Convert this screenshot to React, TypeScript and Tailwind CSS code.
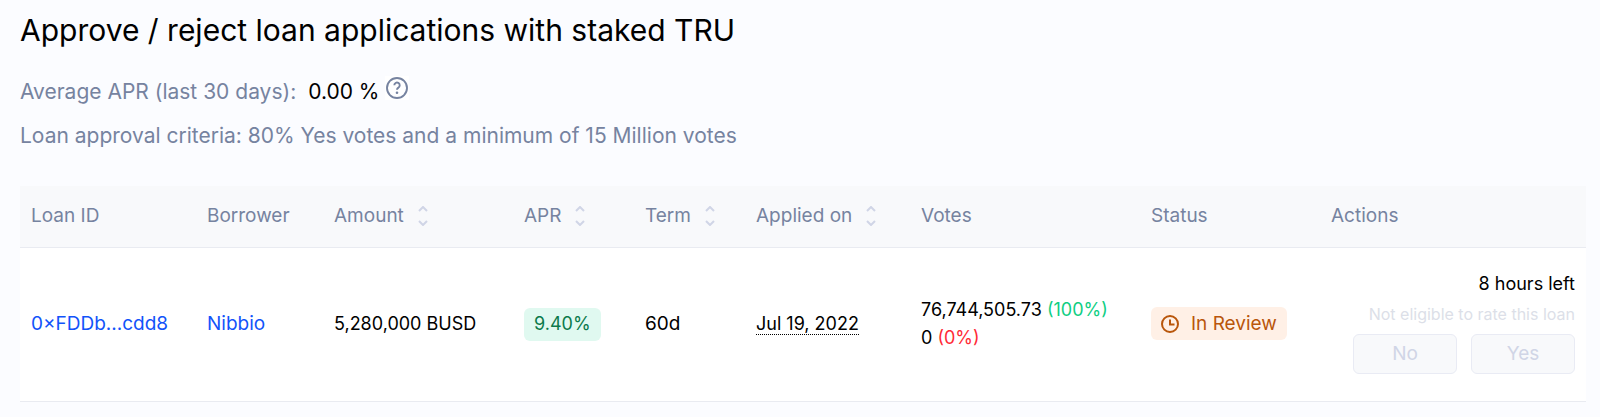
import { useState } from 'react';

type SortKey = 'amount' | 'apr' | 'term' | 'appliedOn';

interface Column {
  label: string;
  width: string;
  sortKey?: SortKey;
}

interface Loan {
  id: string;
  borrower: string;
  amount: number;
  apr: number;
  term: number;
  appliedOn: string;
  yesVotes: string;
  yesShare: string;
  noVotes: string;
  noShare: string;
  status: string;
  timeLeft: string;
}

const COLUMNS: Column[] = [
  { label: 'Loan ID', width: 'w-[176px]' },
  { label: 'Borrower', width: 'w-[127px]' },
  { label: 'Amount', width: 'w-[190px]', sortKey: 'amount' },
  { label: 'APR', width: 'w-[121px]', sortKey: 'apr' },
  { label: 'Term', width: 'w-[111px]', sortKey: 'term' },
  { label: 'Applied on', width: 'w-[165px]', sortKey: 'appliedOn' },
  { label: 'Votes', width: 'w-[230px]' },
  { label: 'Status', width: 'w-[180px]' },
  { label: 'Actions', width: 'w-[266px]' },
];

const LOANS: Loan[] = [
  {
    id: '0×FDDb...cdd8',
    borrower: 'Nibbio',
    amount: 5280000,
    apr: 9.4,
    term: 60,
    appliedOn: 'Jul 19, 2022',
    yesVotes: '76,744,505.73',
    yesShare: '100%',
    noVotes: '0',
    noShare: '0%',
    status: 'In Review',
    timeLeft: '8 hours left',
  },
];

function sortValue(loan: Loan, key: SortKey) {
  return key === 'appliedOn' ? Date.parse(loan.appliedOn) : loan[key];
}

function HelpIcon() {
  return (
    <svg className="h-6 w-6" viewBox="0 0 24 24" fill="none" stroke="currentColor" strokeWidth="1.9">
      <circle cx="12" cy="12" r="10" />
      <path d="M9.3 9.3a2.7 2.7 0 1 1 4.1 2.3c-1 .6-1.4 1.1-1.4 2.2" />
      <circle cx="12" cy="16.8" r="1.3" fill="currentColor" stroke="none" />
    </svg>
  );
}

function SortIcon() {
  return (
    <svg
      className="h-5 w-[10px] text-[#d0d5e6]"
      viewBox="0 0 10 20"
      fill="none"
      stroke="currentColor"
      strokeWidth="2"
    >
      <path d="M1 5l4-4 4 4M1 15l4 4 4-4" />
    </svg>
  );
}

function ClockIcon() {
  return (
    <svg className="h-[18px] w-[18px]" viewBox="0 0 18 18" fill="none" stroke="currentColor" strokeWidth="2">
      <circle cx="9" cy="9" r="8" />
      <path d="M9 4.5V9.5h4.5" />
    </svg>
  );
}

export default function App() {
  const [sortKey, setSortKey] = useState<SortKey | null>(null);
  const [ascending, setAscending] = useState(true);

  const handleSort = (key: SortKey) => {
    setAscending(sortKey === key ? !ascending : true);
    setSortKey(key);
  };

  const loans = [...LOANS];
  if (sortKey) {
    loans.sort((a, b) => (sortValue(a, sortKey) - sortValue(b, sortKey)) * (ascending ? 1 : -1));
  }

  return (
    <main className="min-h-screen bg-[#fbfcff] pt-3 pr-[14px] pb-3 pl-5 font-['Inter',sans-serif] text-black">
      <h1 className="text-[30px] leading-9">Approve / reject loan applications with staked TRU</h1>

      <div className="mt-[26px] flex items-center text-[21px] leading-9 text-[#7683a0]">
        <span>Average APR (last 30 days):</span>
        <span className="ml-3 text-black">0.00 %</span>
        <button type="button" aria-label="About average APR" className="mb-2 ml-1.5 bg-white">
          <HelpIcon />
        </button>
      </div>
      <p className="mt-2 text-[21px] leading-9 text-[#7683a0]">
        Loan approval criteria: 80% Yes votes and a minimum of 15 Million votes
      </p>

      <table className="mt-8 w-full border-collapse text-left text-[19px] leading-7 whitespace-nowrap">
        <thead className="bg-[#f8f9fb] text-[#7683a0]">
          <tr className="border-b border-[#e9ebf1]">
            {COLUMNS.map((col) => (
              <th key={col.label} scope="col" className={`h-[61px] px-[11px] font-normal ${col.width}`}>
                {col.sortKey ? (
                  <button
                    type="button"
                    onClick={() => handleSort(col.sortKey!)}
                    className="flex items-center gap-[14px]"
                  >
                    {col.label}
                    <SortIcon />
                  </button>
                ) : (
                  col.label
                )}
              </th>
            ))}
          </tr>
        </thead>
        <tbody className="bg-white">
          {loans.map((loan) => (
            <tr key={loan.id} className="border-b border-[#e9ebf1]">
              <td className="px-[11px]">
                <a href="#loan" className="text-[#1253fa]">
                  {loan.id}
                </a>
              </td>
              <td className="px-[11px]">
                <a href="#borrower" className="text-[#1253fa]">
                  {loan.borrower}
                </a>
              </td>
              <td className="px-[11px] text-[18px]">{loan.amount.toLocaleString('en-US')} BUSD</td>
              <td className="px-[11px] text-[18px]">
                <span className="inline-flex h-[33px] items-center rounded-md bg-[#e0f9f0] px-[10px] text-[#0b7a4b]">
                  {loan.apr.toFixed(2)}%
                </span>
              </td>
              <td className="px-[11px]">{loan.term}d</td>
              <td className="px-[11px] text-[18px]">
                <span className="inline-block border-b border-dotted border-black leading-5">{loan.appliedOn}</span>
              </td>
              <td className="px-[11px] text-[18px]">
                <div>
                  {loan.yesVotes} <span className="text-[#0fce83]">({loan.yesShare})</span>
                </div>
                <div>
                  {loan.noVotes} <span className="text-[#ff2a36]">({loan.noShare})</span>
                </div>
              </td>
              <td className="px-[11px]">
                <span className="inline-flex h-[33px] items-center gap-3 rounded-md bg-[#fff0e6] px-[10px] text-[#b9560b]">
                  <ClockIcon />
                  {loan.status}
                </span>
              </td>
              <td className="px-[11px] pt-[22px] pb-[27px] text-right">
                <div className="text-[18px]">{loan.timeLeft}</div>
                <div className="mt-1 text-[16px] leading-6 text-[#dcdfe8]">Not eligible to rate this loan</div>
                <div className="mt-2 flex justify-end gap-[14px] text-[#d0d5e6]">
                  <button type="button" disabled className="h-10 w-[104px] rounded-md border border-[#e9ebf4] bg-[#f8f9fb]">
                    No
                  </button>
                  <button type="button" disabled className="h-10 w-[104px] rounded-md border border-[#e9ebf4] bg-[#f8f9fb]">
                    Yes
                  </button>
                </div>
              </td>
            </tr>
          ))}
        </tbody>
      </table>
    </main>
  );
}
